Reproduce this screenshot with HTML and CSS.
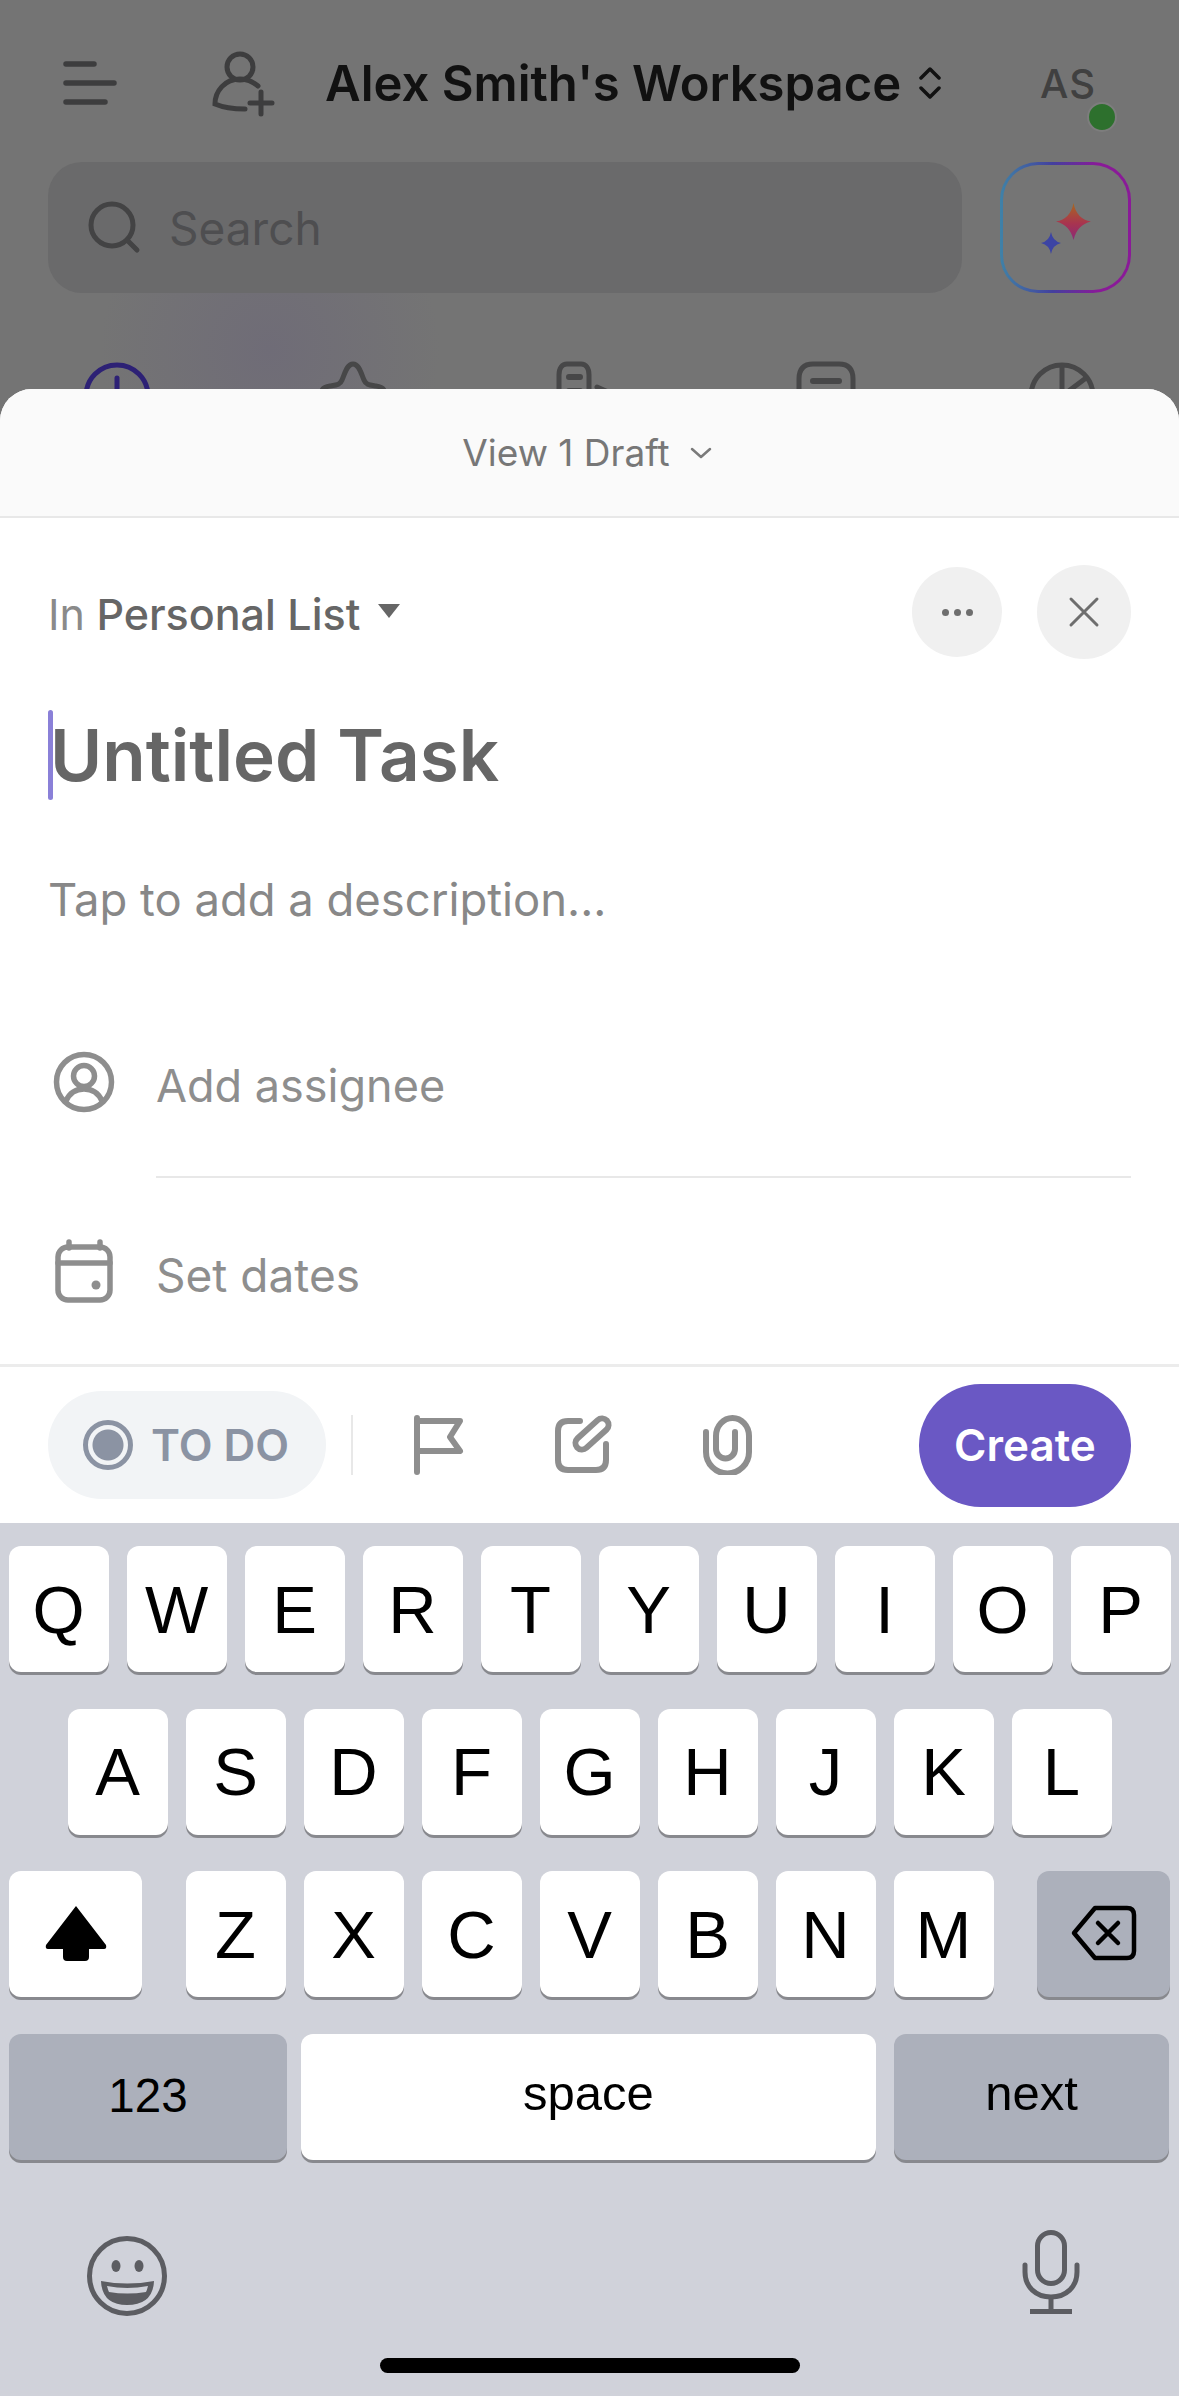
FILE: index.html
```html
<!DOCTYPE html>
<html lang="en">
<head>
    <meta charset="UTF-8">
    <meta name="viewport" content="width=device-width, initial-scale=1.0">
    <title>New Task</title>
    <link rel="stylesheet" href="styles.css">
</head>
<body>
    <div class="phone">
        <section class="backdrop">
            <header class="topbar">
                <svg class="menu-icon" viewBox="0 0 54 46" fill="none" stroke="#3d3d3e" stroke-width="5.5" stroke-linecap="round">
                    <path d="M3 4H31M3 23H51M3 42H42"/>
                </svg>
                <svg class="invite-icon" viewBox="0 0 65 68" fill="none" stroke="#3d3d3e" stroke-width="5" stroke-linecap="round">
                    <circle cx="30" cy="18" r="13"/>
                    <path d="M48 37C42 32 36 30 30 30C15 30 5 42 5 55C12 58 22 60 35 60"/>
                    <path d="M51 43V65M40 54H62"/>
                </svg>
                <h1 class="workspace">Alex Smith's Workspace</h1>
                <svg class="switch-icon" viewBox="0 0 22 32" fill="none" stroke="#111" stroke-width="3.5" stroke-linecap="round" stroke-linejoin="round">
                    <path d="M2 11L11 2L20 11M2 21L11 30L20 21"/>
                </svg>
                <div class="avatar">AS<span class="status-dot"></span></div>
            </header>
            <div class="search-row">
                <div class="search">
                    <svg class="search-icon" viewBox="0 0 56 56" fill="none" stroke="#434344" stroke-width="5" stroke-linecap="round">
                        <circle cx="25" cy="25" r="21"/>
                        <path d="M40 40L50 50"/>
                    </svg>
                    <span>Search</span>
                </div>
                <div class="ai-button">
                    <svg class="ai-icon" viewBox="0 0 60 60">
                        <defs>
                            <linearGradient id="spark" x1="0" y1="0" x2="0" y2="1">
                                <stop offset="0" stop-color="#a8681f"/>
                                <stop offset="0.55" stop-color="#a8344f"/>
                                <stop offset="1" stop-color="#8a2a78"/>
                            </linearGradient>
                        </defs>
                        <path fill="url(#spark)" d="M37.5 5Q40.500 21 55 23.500Q41 27 37.500 42Q34 27 20 23.500Q34.500 21 37.500 5Z"/>
                        <path fill="#3c44a4" d="M15 34Q16.500 43 25 45Q16.500 47 15 56Q13.500 47 5 45Q13.500 43 15 34Z"/>
                    </svg>
                </div>
            </div>
            <nav class="quick-nav">
                <svg viewBox="0 0 70 70" fill="none" stroke="#2d2175" stroke-width="5" stroke-linecap="round">
                    <circle cx="35" cy="35" r="31"/>
                    <path d="M35 17V35"/>
                </svg>
                <svg viewBox="0 0 70 70" fill="none" stroke="#474748" stroke-width="5" stroke-linejoin="round">
                    <path d="M35 3C29 3 27 12 24 19C22 24 19 24 12 25C4 26 2 30 5 36H65C68 30 66 26 58 25C51 24 48 24 46 19C43 12 41 3 35 3Z"/>
                </svg>
                <svg viewBox="0 0 70 70" fill="none" stroke="#474748" stroke-width="5" stroke-linecap="round">
                    <path d="M4 40V14C4 7 7 3 12 3H26C31 3 34 7 34 14V30"/>
                    <path d="M14 16H25M14 30H25" stroke-width="6"/>
                    <path d="M42 26L64 36"/>
                </svg>
                <svg viewBox="0 0 70 70" fill="none" stroke="#474748" stroke-width="5" stroke-linecap="round">
                    <path d="M8 40V18C8 8 13 3 22 3H48C57 3 62 8 62 18V40"/>
                    <path d="M22 20H48M22 33H48" stroke-width="6"/>
                </svg>
                <svg viewBox="0 0 70 70" fill="none" stroke="#474748" stroke-width="5">
                    <circle cx="35" cy="35" r="31"/>
                    <path d="M35 4V35L59 17"/>
                </svg>
            </nav>
        </section>

        <section class="sheet">
            <div class="drafts">
                <span>View 1 Draft</span>
                <svg class="drafts-chevron" viewBox="0 0 22 12" fill="none" stroke="#7a7a7a" stroke-width="2.500" stroke-linecap="round" stroke-linejoin="round">
                    <path d="M2 2L11 10L20 2"/>
                </svg>
            </div>
            <div class="sheet-head">
                <div class="list-picker">
                    <span class="list-in">In</span> Personal List
                    <span class="caret"></span>
                </div>
                <button class="round-btn more-btn"><span></span><span></span><span></span></button>
                <button class="round-btn close-btn">
                    <svg viewBox="0 0 32 32" fill="none" stroke="#6e6e6e" stroke-width="3" stroke-linecap="round">
                        <path d="M3 3L29 29M29 3L3 29"/>
                    </svg>
                </button>
            </div>
            <div class="task-title"><span class="cursor"></span>Untitled Task</div>
            <p class="description">Tap to add a description...</p>
            <div class="field first-field">
                <svg class="field-icon" viewBox="0 0 64 64" fill="none" stroke="#8e8e8e" stroke-width="5.500">
                    <circle cx="32" cy="32" r="27.500"/>
                    <circle cx="32" cy="26" r="10.500"/>
                    <path d="M14 51C18 42 25 39 32 39C39 39 46 42 50 51"/>
                </svg>
                <div class="field-label with-line">Add assignee</div>
            </div>
            <div class="field last-field">
                <svg class="field-icon" viewBox="0 0 64 64" fill="none" stroke="#8e8e8e" stroke-width="5.500" stroke-linecap="round">
                    <rect x="6" y="8" width="52" height="53" rx="10"/>
                    <path d="M6 24H58M17 3V9M48 3V9"/>
                    <circle cx="44" cy="46" r="4.500" fill="#8e8e8e" stroke="none"/>
                </svg>
                <div class="field-label">Set dates</div>
            </div>
            <div class="toolbar">
                <div class="status-pill"><span class="status-ring"></span>TO DO</div>
                <span class="toolbar-divider"></span>
                <svg class="flag-icon" viewBox="0 0 50 60" fill="none" stroke="#8e8e8e" stroke-width="6" stroke-linecap="round" stroke-linejoin="round">
                    <path d="M3 3V57M3 6H46L36 22L46 36H3"/>
                </svg>
                <svg class="edit-icon" viewBox="0 0 60 60" fill="none" stroke="#8e8e8e" stroke-width="6" stroke-linecap="round">
                    <path d="M25 6H13Q3 6 3 16V45Q3 55 13 55H41Q51 55 51 45V29"/>
                    <rect x="17" y="12.500" width="40" height="13" rx="6.500" transform="rotate(-42 37 19)"/>
                </svg>
                <svg class="clip-icon" viewBox="0 0 53 60" fill="none" stroke="#8e8e8e" stroke-width="6" stroke-linecap="round">
                    <path d="M5 17V37A21.500 21.500 0 0 0 48 37V21A16.500 18 0 0 0 15 21V34A9.500 9.500 0 0 0 34 34V17"/>
                </svg>
                <button class="create-btn">Create</button>
            </div>
        </section>

        <section class="keyboard">
            <div class="key-rows">
                <div class="key-row">
                    <div class="key">Q</div><div class="key">W</div><div class="key">E</div><div class="key">R</div><div class="key">T</div><div class="key">Y</div><div class="key">U</div><div class="key">I</div><div class="key">O</div><div class="key">P</div>
                </div>
                <div class="key-row">
                    <div class="key">A</div><div class="key">S</div><div class="key">D</div><div class="key">F</div><div class="key">G</div><div class="key">H</div><div class="key">J</div><div class="key">K</div><div class="key">L</div>
                </div>
                <div class="key-row spread">
                    <div class="key wide">
                        <svg class="shift-icon" viewBox="0 0 64 56">
                            <path fill="#000" d="M32 1L62 40Q63 44 60 44H45V52Q45 56 41 56H23Q19 56 19 52V44H4Q1 44 2 40Z"/>
                        </svg>
                    </div>
                    <div class="key-group">
                        <div class="key">Z</div><div class="key">X</div><div class="key">C</div><div class="key">V</div><div class="key">B</div><div class="key">N</div><div class="key">M</div>
                    </div>
                    <div class="key wide dark">
                        <svg class="delete-icon" viewBox="0 0 66 56" fill="none" stroke="#000" stroke-width="4.500" stroke-linecap="round" stroke-linejoin="round">
                            <path d="M24 3H56Q63 3 63 10V46Q63 53 56 53H24L3 28Z"/>
                            <path d="M27 18L47 38M47 18L27 38"/>
                        </svg>
                    </div>
                </div>
                <div class="key-row bottom-row">
                    <div class="key dark num-key">123</div>
                    <div class="key space-key">space</div>
                    <div class="key dark next-key">next</div>
                </div>
            </div>
            <div class="keyboard-extras">
                <svg class="emoji-icon" viewBox="0 0 80 80" fill="none">
                    <circle cx="40" cy="40" r="37.500" stroke="#5c5d62" stroke-width="5"/>
                    <ellipse cx="29" cy="30" rx="4.500" ry="6" fill="#5c5d62"/>
                    <ellipse cx="52" cy="30" rx="4.500" ry="6" fill="#5c5d62"/>
                    <path d="M14 45Q40 50 67 45Q66 69 40 69Q15 69 14 45Z" fill="#5c5d62"/>
                    <path d="M20 50Q40 54 61 50Q60 54 59 56Q40 59 22 56Q21 54 20 50Z" fill="#d0d2da"/>
                </svg>
                <svg class="mic-icon" viewBox="0 0 58 84" fill="none" stroke="#5c5d62" stroke-width="5">
                    <rect x="15.500" y="2.500" width="27" height="51" rx="13.500"/>
                    <path d="M3 35V42C3 57 14 67 29 67C44 67 55 57 55 42V35" stroke-linecap="round"/>
                    <path d="M29 67V80M8 81.500H50"/>
                </svg>
            </div>
            <div class="home-bar"></div>
        </section>
    </div>
</body>
</html>
```

FILE: styles.css
```css
* {
    box-sizing: border-box;
}
body {
    margin: 0;
    font-family: Inter, "Liberation Sans", sans-serif;
}
button {
    font-family: inherit;
    border: none;
    padding: 0;
}
.phone {
    display: flex;
    flex-direction: column;
    width: 1179px;
    height: 2396px;
    overflow: hidden;
    background-color: #747474;
}

/* dimmed screen behind the sheet */
.backdrop {
    height: 389px;
    flex-shrink: 0;
    padding-top: 33px;
    overflow: hidden;
    background:
        radial-gradient(ellipse 170px 170px at 270px 350px, #6f6c77, transparent),
        #747474;
}
.topbar {
    display: flex;
    align-items: center;
    height: 100px;
    padding: 0 66px 0 63px;
}
.menu-icon {
    width: 54px;
    height: 46px;
}
.invite-icon {
    width: 65px;
    height: 68px;
    margin-left: 93px;
}
.workspace {
    margin: 0 0 0 50px;
    font-size: 49px;
    font-weight: 600;
    color: #111;
    white-space: nowrap;
}
.switch-icon {
    width: 22px;
    height: 32px;
    margin-left: 18px;
}
.avatar {
    position: relative;
    display: flex;
    align-items: center;
    justify-content: center;
    width: 90px;
    height: 90px;
    margin-left: auto;
    font-size: 40px;
    font-weight: 500;
    letter-spacing: 1px;
    color: #404040;
}
.status-dot {
    position: absolute;
    right: -4px;
    bottom: -4px;
    width: 30px;
    height: 30px;
    border: 2px solid #7d7d7d;
    border-radius: 50%;
    background-color: #2d702d;
}
.search-row {
    display: flex;
    gap: 38px;
    margin: 29px 48px 0;
}
.search {
    display: flex;
    align-items: center;
    gap: 26px;
    flex: 1;
    height: 131px;
    padding-left: 39px;
    border-radius: 34px;
    background-color: #6a6a6b;
    font-size: 46px;
    color: #4e4e50;
}
.search-icon {
    width: 56px;
    height: 56px;
}
.ai-button {
    display: flex;
    align-items: center;
    justify-content: center;
    width: 131px;
    height: 131px;
    border: 3px solid transparent;
    border-radius: 38px;
    background:
        linear-gradient(#757575, #757575) padding-box,
        linear-gradient(90deg, #3f82a8, #43409e 40%, #8a1a98 75%) border-box;
}
.ai-icon {
    width: 60px;
    height: 60px;
}
.quick-nav {
    display: flex;
    justify-content: space-between;
    margin-top: 68px;
    padding: 0 82px;
}
.quick-nav svg {
    width: 70px;
    height: 70px;
}

/* task sheet */
.sheet {
    display: flex;
    flex-direction: column;
    flex-shrink: 0;
    height: 1134px;
    border-radius: 32px 32px 0 0;
    overflow: hidden;
    background-color: #fff;
}
.drafts {
    display: flex;
    align-items: center;
    justify-content: center;
    gap: 20px;
    height: 129px;
    flex-shrink: 0;
    padding-right: 5px;
    border-bottom: 2px solid #e8e8e8;
    background-color: #fafafa;
    font-size: 37px;
    color: #777;
}
.drafts-chevron {
    width: 22px;
    height: 12px;
}
.sheet-head {
    display: flex;
    align-items: center;
    height: 94px;
    margin-top: 47px;
    padding: 0 48px;
}
.list-picker {
    flex: 1;
    padding-top: 4px;
    font-size: 43px;
    font-weight: 500;
    color: #666;
}
.list-in {
    font-weight: 400;
    color: #8a8a8a;
}
.caret {
    display: inline-block;
    margin-left: 6px;
    vertical-align: 12px;
    border-left: 11px solid transparent;
    border-right: 11px solid transparent;
    border-top: 14px solid #666;
}
.round-btn {
    display: flex;
    align-items: center;
    justify-content: center;
    border-radius: 50%;
    background-color: #f0f0f0;
}
.more-btn {
    gap: 5px;
    width: 90px;
    height: 90px;
}
.more-btn span {
    width: 7px;
    height: 7px;
    border-radius: 50%;
    background-color: #6e6e6e;
}
.close-btn {
    width: 94px;
    height: 94px;
    margin-left: 35px;
}
.close-btn svg {
    width: 32px;
    height: 32px;
}
.task-title {
    display: flex;
    align-items: center;
    height: 90px;
    margin: 51px 48px 0;
    font-size: 71px;
    font-weight: 600;
    color: #666;
}
.cursor {
    width: 5px;
    height: 90px;
    margin-right: -3px;
    border-radius: 3px;
    background-color: #8a80d8;
}
.description {
    height: 60px;
    margin: 70px 48px 0;
    font-size: 45.4px;
    line-height: 60px;
    color: #888;
}
.field {
    display: flex;
    align-items: center;
    padding: 0 48px 0 54px;
}
.field-icon {
    width: 64px;
    height: 64px;
    flex-shrink: 0;
    margin-left: -2px;
}
.field-label {
    display: flex;
    align-items: center;
    flex: 1;
    height: 100%;
    margin-left: 40px;
    padding-top: 8px;
    font-size: 45px;
    color: #8e8e8e;
}
.first-field {
    height: 191px;
    margin-top: 57px;
}
.first-field .field-icon {
    margin-bottom: 2px;
}
.last-field {
    height: 186px;
}
.last-field .field-label {
    font-size: 46px;
}
.with-line {
    border-bottom: 2px solid #e8e8e8;
}
.toolbar {
    display: flex;
    align-items: center;
    height: 159px;
    flex-shrink: 0;
    padding: 0 48px;
    border-top: 3px solid #ececec;
}
.status-pill {
    display: flex;
    align-items: center;
    gap: 18px;
    width: 278px;
    height: 108px;
    padding-left: 35px;
    border-radius: 54px;
    background-color: #f2f4f6;
    font-size: 44px;
    font-weight: 600;
    color: #8b93a3;
    white-space: nowrap;
}
.status-ring {
    width: 50px;
    height: 50px;
    border: 5px solid #8b93a3;
    border-radius: 50%;
    background: radial-gradient(circle, #8b93a3 0, #8b93a3 15px, transparent 16px);
}
.toolbar-divider {
    width: 2px;
    height: 60px;
    margin-left: 25px;
    background-color: #e8e8e8;
}
.flag-icon {
    width: 50px;
    height: 60px;
    margin-left: 61px;
}
.edit-icon {
    width: 60px;
    height: 60px;
    margin-left: 91px;
}
.clip-icon {
    width: 53px;
    height: 60px;
    margin-left: 86px;
}
.create-btn {
    width: 212px;
    height: 123px;
    margin-left: auto;
    border-radius: 62px;
    background-color: #6a58c4;
    font-size: 44px;
    font-weight: 600;
    color: #fff;
}

/* keyboard */
.keyboard {
    flex: 1;
    padding-top: 23px;
    background-color: #d0d2da;
}
.key-rows {
    display: flex;
    flex-direction: column;
    gap: 36.5px;
}
.key-row {
    display: flex;
    justify-content: center;
    gap: 18px;
}
.key-row.spread {
    justify-content: space-between;
    padding: 0 9px;
}
.key-group {
    display: flex;
    gap: 18px;
}
.key {
    display: flex;
    align-items: center;
    justify-content: center;
    width: 100px;
    height: 126px;
    border-radius: 12px;
    background-color: #fff;
    box-shadow: 0 3px 0 #88898e;
    font-family: "Liberation Sans", Arial, sans-serif;
    font-size: 67px;
    color: #000;
}
.key.wide {
    width: 133px;
}
.key.dark {
    background-color: #acb0bb;
}
.shift-icon {
    width: 64px;
    height: 56px;
    margin-top: -3px;
}
.delete-icon {
    width: 66px;
    height: 56px;
    margin-top: -3px;
}
.bottom-row {
    justify-content: flex-start;
    gap: 0;
    padding-left: 9px;
}
.bottom-row .key {
    padding-bottom: 8px;
    font-size: 49px;
}
.bottom-row .num-key {
    font-size: 47.5px;
    padding-bottom: 2px;
}
.num-key {
    width: 278px;
}
.space-key {
    width: 575px;
    margin-left: 14px;
}
.next-key {
    width: 275px;
    margin-left: 18px;
}
.keyboard-extras {
    display: flex;
    align-items: center;
    justify-content: space-between;
    height: 90px;
    margin-top: 69px;
    padding: 0 99px 0 87px;
}
.emoji-icon {
    width: 80px;
    height: 80px;
    margin-top: 4px;
}
.mic-icon {
    width: 58px;
    height: 84px;
    margin-top: -3px;
}
.home-bar {
    width: 420px;
    height: 15px;
    margin: 39px auto 0;
    border-radius: 8px;
    background-color: #000;
}
```
